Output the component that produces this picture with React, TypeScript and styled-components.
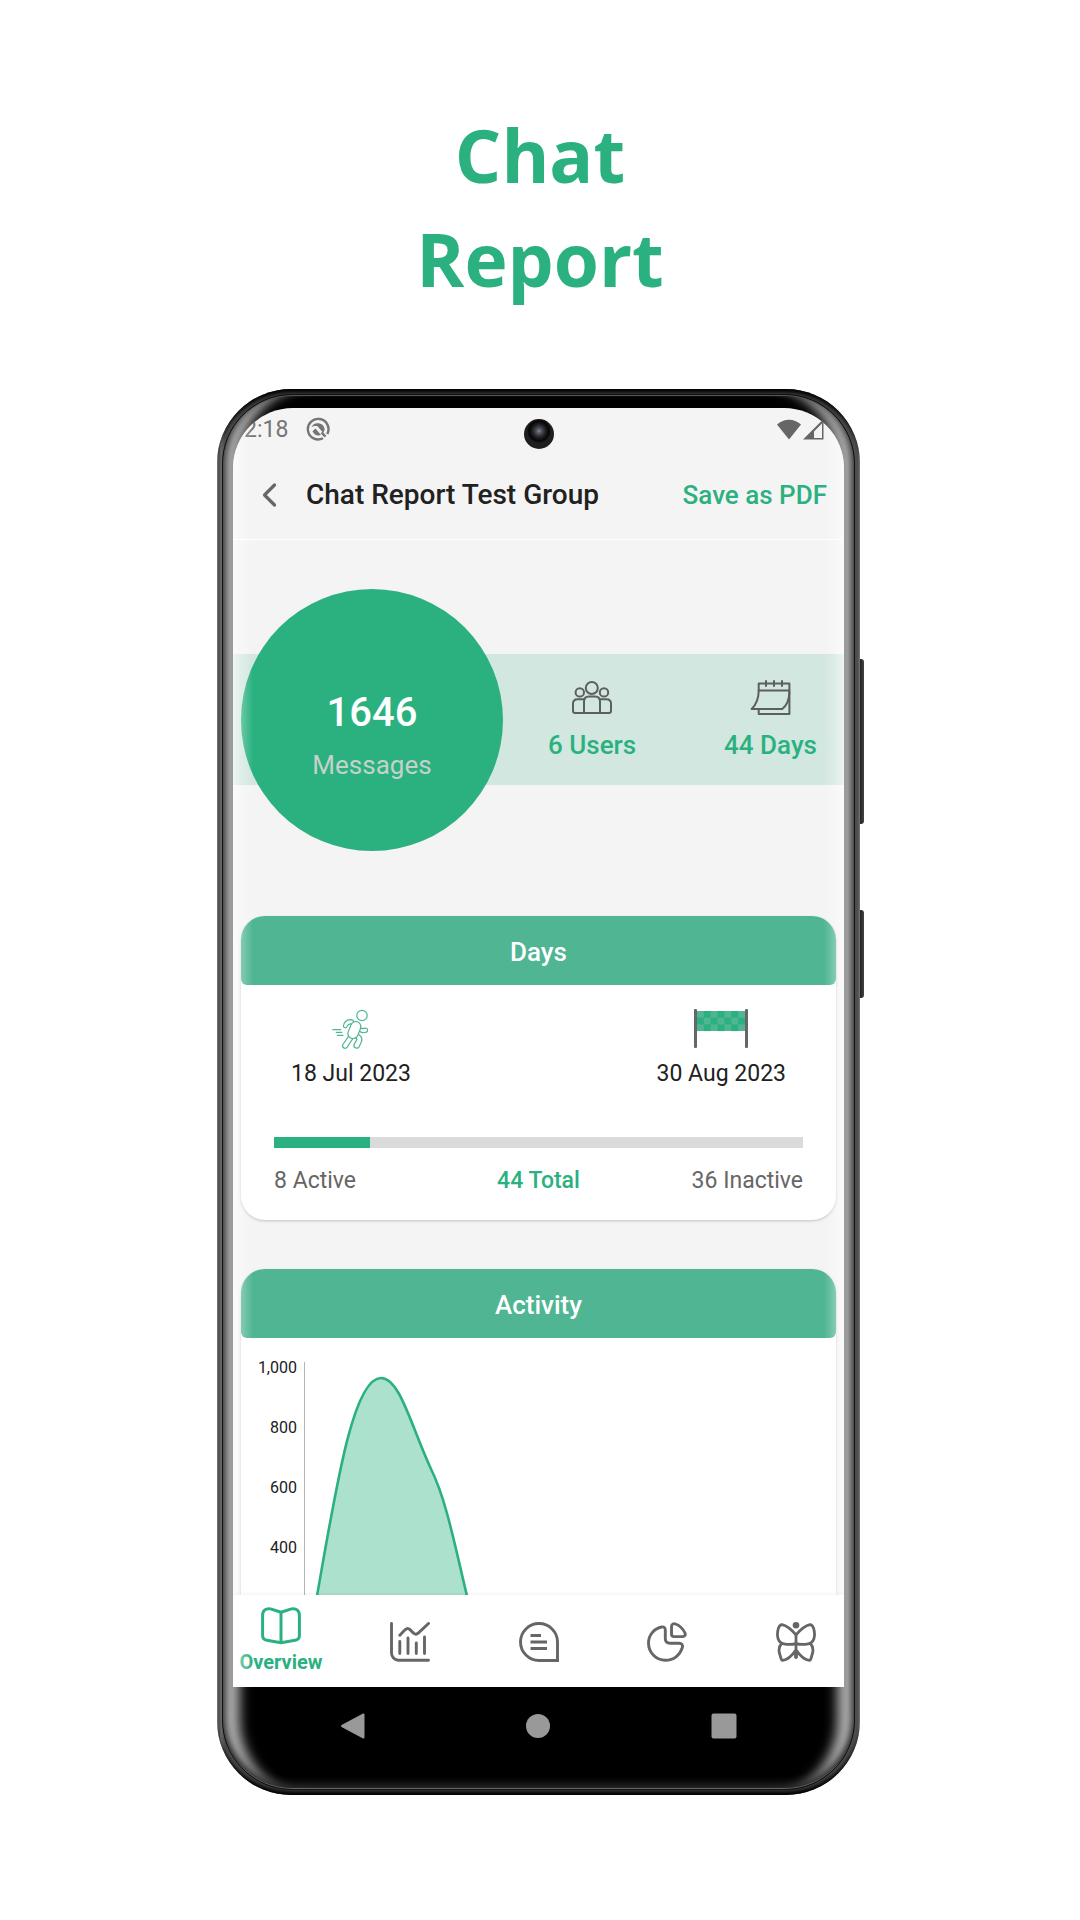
import React from "react";
import styled, { createGlobalStyle } from "styled-components";

const green = "#2bb17f";
const softGreen = "#4fb592";
const grey = "#666666";
const ink = "#212121";

const GlobalStyle = createGlobalStyle`
  *, *::before, *::after { box-sizing: border-box; }
  body { margin: 0; background: #fff; font-family: Roboto, "Noto Sans", sans-serif; color: ${ink}; }
  button { font: inherit; color: inherit; background: none; border: 0; padding: 0; cursor: pointer; }
  h1, h2, p, dl, dd, ol { margin: 0; padding: 0; }
  svg { display: block; }
`;

const Page = styled.main`
  display: flex;
  flex-direction: column;
  align-items: center;
  gap: 78px;
  padding: 103px 0 120px;
`;

const Headline = styled.h1`
  width: 320px;
  font-family: "Open Sans", "Noto Sans", sans-serif;
  font-size: 73px;
  font-weight: 700;
  line-height: 104px;
  text-align: center;
  color: ${green};
`;

const Device = styled.div`
  position: relative;
  width: 60%;
  min-width: 640px;
  padding: 0 4px 0 1px;
`;

const SideKey = styled.span<{ $top: number; $height: number }>`
  position: absolute;
  right: 0;
  top: ${(p) => p.$top}px;
  width: 6px;
  height: ${(p) => p.$height}px;
  border-radius: 0 3px 3px 0;
  background: linear-gradient(90deg, #111, #444);
`;

const Frame = styled.div`
  position: relative;
  padding: 5px;
  border-radius: 74px;
  background: linear-gradient(90deg, #8a8a8a, #4a4a4a 2px, #6a6a6a 4px, #4a4a4a 8px, #4a4a4a calc(100% - 8px), #505050 calc(100% - 2px), #8a8a8a);
  box-shadow: inset 0 7px 4px -3px #000, inset 0 -7px 4px -3px #000;
`;

const Bezel = styled.div`
  padding: 13px 10px 0;
  border: 1px solid #111;
  border-radius: 70px;
  background: #000;
  box-shadow: inset 0 2px 0 -1px #555, inset 0 -2px 0 -1px #666, inset 0 -9px 8px -4px #2a2a2a,
    inset 6px 0 6px -3px #444, inset -6px 0 6px -3px #444,
    inset 28px 0 12px -11px #acacac, inset -28px 0 12px -11px #acacac;
`;

const Screen = styled.div`
  position: relative;
  overflow: hidden;
  border-radius: 60px 60px 0 0;
  background: #f4f4f4;

  &::after {
    content: "";
    position: absolute;
    inset: 0;
    pointer-events: none;
    background: linear-gradient(90deg, rgba(255, 255, 255, 0.6), rgba(255, 255, 255, 0.3) 8px, transparent 20px,
      transparent calc(100% - 20px), rgba(255, 255, 255, 0.3) calc(100% - 8px), rgba(255, 255, 255, 0.6));
  }
`;

const Camera = styled.span`
  position: absolute;
  z-index: 1;
  top: 11px;
  left: 50%;
  width: 30px;
  height: 30px;
  margin-left: -15px;
  border-radius: 50%;
  background: radial-gradient(circle at 50% 40%, #7d8594 0, #4a4d56 3px, #1c1c1e 7px, #050505 10px, #1e1e1e 12px);
`;

const StatusBar = styled.div`
  display: flex;
  align-items: center;
  height: 42px;
  padding: 0 20px 0 11px;
  font-size: 23px;
  color: #757575;
`;

const StatusIcon = styled.svg`
  margin-left: 18px;
`;

const Signals = styled.div`
  display: flex;
  gap: 2px;
  margin-left: auto;
`;

const AppBar = styled.header`
  display: flex;
  align-items: center;
  height: 90px;
  padding: 0 17px 0 26px;
  border-bottom: 1px solid #fff;
  font-size: 28px;
  font-weight: 500;
`;

const BackButton = styled.button`
  width: 47px;
`;

const ChatName = styled.h2`
  flex: 1;
  font-size: 28px;
  font-weight: 500;
`;

const SaveButton = styled.button`
  color: ${green};
  font-size: 26px;
  font-weight: 500;
`;

const Band = styled.section`
  display: flex;
  align-items: center;
  height: 131px;
  margin: 114px 0 131px;
  padding: 0 27px 0 8px;
  background: #d1e7df;
`;

const Total = styled.div`
  display: flex;
  flex: none;
  flex-direction: column;
  align-items: center;
  justify-content: center;
  gap: 12px;
  width: 262px;
  height: 262px;
  margin-right: 45px;
  padding-top: 30px;
  border-radius: 50%;
  background: ${green};
`;

const TotalCount = styled.strong`
  font-size: 40px;
  font-weight: 500;
  line-height: 48px;
  color: #fff;
`;

const TotalLabel = styled.span`
  font-size: 26px;
  line-height: 32px;
  color: #c4d2cb;
`;

const Stats = styled.div`
  display: flex;
  flex: 1;
  justify-content: space-between;
  padding-top: 2px;
`;

const Stat = styled.div`
  display: flex;
  flex-direction: column;
  align-items: center;
  gap: 14px;
  font-size: 26px;
  font-weight: 500;
  line-height: 32px;
  color: ${green};
`;

const Card = styled.section<{ $cropped?: boolean }>`
  margin: 0 8px ${(p) => (p.$cropped ? 0 : 49)}px;
  border-radius: ${(p) => (p.$cropped ? "24px 24px 0 0" : "24px")};
  background: #fff;
  box-shadow: 0 1px 3px rgba(0, 0, 0, 0.2);
`;

const CardTitle = styled.h2`
  height: 69px;
  padding-top: 1px;
  border-radius: 24px 24px 6px 6px;
  background: ${softGreen};
  font-size: 26px;
  font-weight: 500;
  line-height: 70px;
  text-align: center;
  color: #fff;
`;

const DaysBody = styled.div`
  padding: 22px 33px 23px;
`;

const Dates = styled.div`
  display: flex;
  justify-content: space-between;
  padding: 0 17px;
`;

const DateMark = styled.div`
  display: flex;
  flex-direction: column;
  align-items: center;
  gap: 7px;
  font-size: 23px;
  line-height: 32px;
`;

const Meter = styled.div`
  height: 11px;
  margin: 47px 0 17px;
  background: #dadada;
`;

const MeterFill = styled.div`
  height: 100%;
  background: ${green};
`;

const Legend = styled.div`
  display: grid;
  grid-template-columns: 1fr auto 1fr;
  font-size: 23px;
  line-height: 32px;
  color: ${grey};
`;

const LegendItem = styled.span<{ $align: string; $accent?: boolean }>`
  text-align: ${(p) => p.$align};
  color: ${(p) => (p.$accent ? green : "inherit")};
  font-weight: ${(p) => (p.$accent ? 500 : 400)};
`;

const ChartArea = styled.div`
  display: flex;
  gap: 7px;
  height: 257px;
  overflow: hidden;
`;

const Scale = styled.ol`
  flex: none;
  width: 56px;
  list-style: none;
  font-size: 16px;
  line-height: 60px;
  text-align: right;
`;

const Plot = styled.svg`
  flex: none;
`;

const TabBar = styled.nav`
  display: flex;
  justify-content: space-between;
  position: relative;
  height: 92px;
  padding: 1px 5px 0;
  background: #fff;
  box-shadow: 0 -1px 4px rgba(0, 0, 0, 0.06);
`;

const Tab = styled.button<{ $active?: boolean }>`
  display: flex;
  flex-direction: column;
  align-items: center;
  justify-content: center;
  gap: 3px;
  width: 86px;
  font-size: 20px;
  font-weight: 700;
  line-height: 28px;
  color: ${(p) => (p.$active ? green : grey)};
`;

const SystemBar = styled.div`
  display: flex;
  justify-content: space-around;
  height: 102px;
  padding: 26px 27px 0;
`;

const SystemButton = styled.button`
  width: 26px;
  height: 26px;
`;

const line = { fill: "none", stroke: "currentColor", strokeLinecap: "round" as const, strokeLinejoin: "round" as const };

const UsersIcon = () => (
  <svg width="40" height="35" viewBox="0 0 40 35" {...line} stroke="#5c5f5e" strokeWidth="2">
    <circle cx="19.8" cy="8" r="6" />
    <circle cx="7.8" cy="12.4" r="4.2" />
    <circle cx="32" cy="12.4" r="4.2" />
    <path d="M12 33V21.5c0-3 2-5 5-5h6c3 0 5 2 5 5V33" />
    <path d="M12.5 19.3H5.5c-2.700 0-4.500 1.800-4.500 4.500V31c0 1.200.8 2 2 2h34c1.200 0 2-.8 2-2v-7.200c0-2.700-1.800-4.500-4.500-4.500h-7" />
  </svg>
);

const CalendarIcon = () => (
  <svg width="41" height="35" viewBox="0 0 41 35" {...line} stroke="#5c5f5e" strokeWidth="2">
    <path d="M8.700 10.500V3.400h30.700v30.600H8.700V29.500M8.700 10.500h30.500M16 1v5M24 1v5M32 1v5" />
    <path d="M8.700 10.500c0 8-2.500 14-7 18.500h30.500c4-3 7-9 7.200-17" />
  </svg>
);

const RunnerIcon = () => (
  <svg width="38" height="44" viewBox="0 0 38 44" {...line} stroke={softGreen} strokeWidth="1.200">
    <circle cx="30" cy="8.500" r="5.200" />
    <rect x="17.300" y="14.300" width="10.200" height="17.500" rx="5" transform="rotate(22 22.400 23)" />
    <path d="M21.800 14.800c-.2-1.200-1.500-2.200-3.500-2.200-4.200.1-6.700 3.400-6.900 6.400-.1 2 2.700 2.500 3.600.6.700-1.700 1.900-2.900 4-2.600" />
    <path d="M28.300 20.800c1.700 1.600 3.300.4 5 .4 2.900 0 3.100 3.400.6 4.100-2.300.8-4.500.5-6.400-1" />
    <path d="M16.600 29.300l-5.700 8.200c-1.500 3.200 2.300 5 4.300 2.600l5.700-8.600" />
    <path d="M26.700 27.500c3 2 4 4 2.700 7.300l-2.300 5c-1.800 2.700-6 1-5.100-2.200l3-5.200-1.300-2" />
    <path d="M.8 22.700h8M4.300 25.400h5.500M5.300 28.300H11" />
  </svg>
);

const FlagIcon = () => (
  <svg width="54" height="44" viewBox="0 -2 54 44">
    <rect x="3" y="2" width="48" height="20" fill={softGreen} />
    {Array.from({ length: 21 }, (_, i) => i)
      .filter((i) => i % 2 === 1)
      .map((i) => {
        const row = Math.floor(i / 7);
        const col = i % 7;
        return <rect key={i} x={3 + col * 6.86} y={2 + row * 6.7} width="6.860" height="6.700" fill={green} />;
      })}
    <rect width="3" height="39" rx="1" fill={grey} />
    <rect x="51" width="3" height="39" rx="1" fill={grey} />
  </svg>
);

const BookIcon = () => (
  <svg width="40" height="38" viewBox="0 0 40 38" {...line} strokeWidth="3">
    <path d="M20 5.200L9.600 1.900C5 .8 1.600 3.600 1.600 8v20.500c0 2.500 1.500 4.300 4.300 4.800L20 35.800l14.100-2.500c2.800-.5 4.300-2.300 4.300-4.800V8c0-4.400-3.400-7.200-8-6.100L20 5.200v30.600" />
  </svg>
);

const TrendIcon = () => (
  <svg width="40" height="40" viewBox="0 0 40 40" {...line} strokeWidth="2.900">
    <path d="M1.500 1.500V31c0 4 3 7.200 7 7.200h30M9.800 19.500V31.500M18 16v15.500M26.300 21v10.500M34.500 15v16.500" />
    <path d="M9.800 13.300l5.500-5.700c1.600-1.500 3.200-1.500 4.700 0l3.500 3.500c1.800 1.500 3.500 1.300 5-.2L38.500 1.500" />
  </svg>
);

const ChatIcon = () => (
  <svg width="40" height="40" viewBox="0 0 40 40" fill="none" stroke="currentColor" strokeWidth="2.900">
    <path d="M20 1.500A18.500 18.500 0 0 0 20 38.500H38.500V20A18.500 18.500 0 0 0 20 1.500Z" />
    <path d="M11.500 13.500H22M11.500 20H28M11.500 26.500H28" strokeWidth="3.200" />
  </svg>
);

const PieIcon = () => (
  <svg width="40" height="40" viewBox="0 0 40 40" {...line} strokeWidth="2.900">
    <path d="M14.800 5C7 6.500 1.500 13 1.500 21c0 9.700 7.600 17.300 17 17.300 8 0 14.500-5 16.800-12.600.8-2.700-.6-4.500-3.300-4.500H23c-3 0-4.700-1.700-4.700-4.700V8c0-2.200-1.300-3.400-3.500-3Z" />
    <path d="M28.500 2c4 1.500 7.500 4.700 9.500 9 .8 2-.2 3.600-2.300 3.600H27c-1.700 0-2.500-.9-2.500-2.500V4.500c0-2.200 1.800-3.300 4-2.500Z" />
  </svg>
);

const ButterflyIcon = () => (
  <svg width="40" height="40" viewBox="0 0 40 40" {...line} strokeWidth="2.800">
    <circle cx="20" cy="3.300" r="3.300" fill="currentColor" stroke="none" />
    <path d="M20 12.800C15 7 10 3.500 6 2.600 2.500 2.500 1.300 9 1.500 13.500c.2 4.500 2.500 7.500 6.300 8.300 4 .8 8.200 1 12.200-.2 4 1.200 8.200 1 12.200.2 3.800-.8 6.100-3.800 6.300-8.300.2-4.500-1-11-4.500-10.900-4 .9-9 4.400-14 10.200Z" />
    <path d="M5.500 21.500c-3 3.500-3 7.500-1.500 11.500.6 2 1 5 2.300 5.400 4.700-.4 9.700-4.400 13.700-10.600 4 6.200 9 10.200 13.700 10.600 1.300-.4 1.700-3.400 2.300-5.400 1.500-4 1.500-8-1.500-11.500M20 13v22.500" />
    <path d="M20 28l-3 4.500h1.800V36h2.400V32.500H23Z" fill="currentColor" strokeWidth="1" />
  </svg>
);

const tabs = [
  { name: "Overview", Icon: BookIcon },
  { name: "Trends", Icon: TrendIcon },
  { name: "Chats", Icon: ChatIcon },
  { name: "Shares", Icon: PieIcon },
  { name: "Personality", Icon: ButterflyIcon },
];

const days = { active: 8, inactive: 36, total: 44 };
const curve = "M13 258C32 150 49 40 77 40C96 40 107 88 127 131C142 161 151 208 163 258";

export default function App() {
  return (
    <Page>
      <GlobalStyle />
      <Headline>Chat Report</Headline>
      <Device>
        <SideKey $top={270} $height={165} />
        <SideKey $top={521} $height={88} />
        <Frame>
          <Bezel>
            <Screen>
              <Camera />
              <StatusBar>
                <span>2:18</span>
                <StatusIcon width="24" height="24" viewBox="0 0 24 24" fill="none" stroke="#757575" strokeWidth="2.400">
                  <path d="M21.300 17A10.300 10.300 0 1 0 17 21.300" />
                  <path d="M5.300 10.500A7 7 0 0 1 18.700 12.500L17.300 16L11.500 9.300C9.500 8.700 7.300 9 5.300 10.500Z" fill="#757575" stroke="none" />
                  <path d="M6.500 14.300l3-2.800 5.500 6.500c-3.500 1.300-7 0-8.500-3.700Z" fill="#757575" stroke="none" />
                  <path d="M15.500 15.500l4 4.200" />
                </StatusIcon>
                <Signals>
                  <svg width="24" height="21" viewBox="0 0 24 21">
                    <path d="M12 20.500L0 5.500C7 -.9 17 -.9 24 5.500Z" fill={grey} />
                  </svg>
                  <svg width="21" height="21" viewBox="0 0 21 21">
                    <path d="M0 20.500L20.500 0V20.500ZM11 19H19V4.500L11 12.500Z" fill={grey} fillRule="evenodd" />
                  </svg>
                </Signals>
              </StatusBar>
              <AppBar>
                <BackButton aria-label="Back">
                  <svg width="20" height="26" viewBox="0 0 20 26" {...line} stroke={grey} strokeWidth="3.200">
                    <path d="M15.500 3L5.500 13L15.500 23" />
                  </svg>
                </BackButton>
                <ChatName>Chat Report Test Group</ChatName>
                <SaveButton>Save as PDF</SaveButton>
              </AppBar>

              <Band>
                <Total>
                  <TotalCount>1646</TotalCount>
                  <TotalLabel>Messages</TotalLabel>
                </Total>
                <Stats>
                  <Stat>
                    <UsersIcon />
                    <span>6 Users</span>
                  </Stat>
                  <Stat>
                    <CalendarIcon />
                    <span>44 Days</span>
                  </Stat>
                </Stats>
              </Band>

              <Card>
                <CardTitle>Days</CardTitle>
                <DaysBody>
                  <Dates>
                    <DateMark>
                      <RunnerIcon />
                      <span>18 Jul 2023</span>
                    </DateMark>
                    <DateMark>
                      <FlagIcon />
                      <span>30 Aug 2023</span>
                    </DateMark>
                  </Dates>
                  <Meter>
                    <MeterFill style={{ width: `${(days.active / days.total) * 100}%` }} />
                  </Meter>
                  <Legend>
                    <LegendItem $align="left">{days.active} Active</LegendItem>
                    <LegendItem $align="center" $accent>{days.total} Total</LegendItem>
                    <LegendItem $align="right">{days.inactive} Inactive</LegendItem>
                  </Legend>
                </DaysBody>
              </Card>

              <Card $cropped>
                <CardTitle>Activity</CardTitle>
                <ChartArea>
                  <Scale>
                    <li>1,000</li>
                    <li>800</li>
                    <li>600</li>
                    <li>400</li>
                  </Scale>
                  <Plot width="480" height="257" viewBox="0 0 480 257">
                    <path d="M.5 24V257" stroke="#b5b5b5" strokeWidth="1" />
                    <path d={curve} fill="#abe1cd" stroke={green} strokeWidth="2.600" />
                  </Plot>
                </ChartArea>
              </Card>

              <TabBar>
                {tabs.map(({ name, Icon }, i) => (
                  <Tab key={name} $active={i === 0} aria-label={name}>
                    <Icon />
                    {i === 0 && <span>{name}</span>}
                  </Tab>
                ))}
              </TabBar>
            </Screen>
            <SystemBar>
              <SystemButton aria-label="Back">
                <svg width="26" height="26" viewBox="0 0 26 26">
                  <path d="M2 13L23.500 1.500V24.500Z" fill="#999" stroke="#999" strokeWidth="2" strokeLinejoin="round" />
                </svg>
              </SystemButton>
              <SystemButton aria-label="Home">
                <svg width="26" height="26" viewBox="0 0 26 26">
                  <circle cx="13" cy="13" r="12" fill="#999" />
                </svg>
              </SystemButton>
              <SystemButton aria-label="Recent apps">
                <svg width="26" height="26" viewBox="0 0 26 26">
                  <rect x=".5" y=".5" width="25" height="25" rx="2" fill="#999" />
                </svg>
              </SystemButton>
            </SystemBar>
          </Bezel>
        </Frame>
      </Device>
    </Page>
  );
}
